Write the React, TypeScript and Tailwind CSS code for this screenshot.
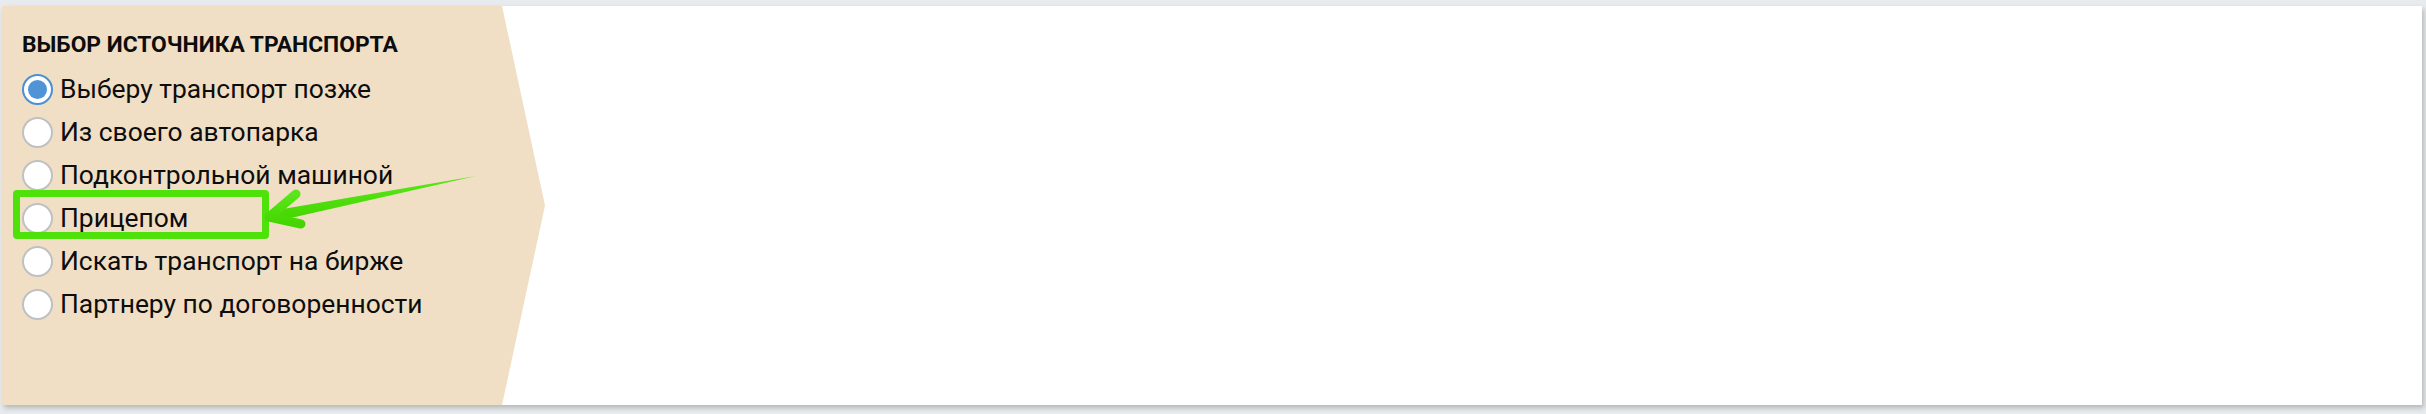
import React from "react";

const options = [
  "Выберу транспорт позже",
  "Из своего автопарка",
  "Подконтрольной машиной",
  "Прицепом",
  "Искать транспорт на бирже",
  "Партнеру по договоренности",
];

function Radio({ checked }: { checked: boolean }) {
  if (checked) {
    return (
      <span className="flex h-[31px] w-[31px] shrink-0 items-center justify-center rounded-full border-[2.5px] border-[#4a8fd8] bg-white">
        <span className="h-[19px] w-[19px] rounded-full bg-[#5094d6]" />
      </span>
    );
  }
  return (
    <span className="h-[31px] w-[31px] shrink-0 rounded-full border-[2px] border-[#bfc0c2] bg-white" />
  );
}

export default function App() {
  return (
    <div
      className="min-h-[414px] w-full bg-[#e8ebed] pt-[6px] pl-[2px] pr-[4px]"
      style={{ fontFamily: "Roboto, 'Liberation Sans', sans-serif" }}
    >
      <div className="relative h-[399px] bg-white shadow-[2px_3px_5px_rgba(0,0,0,0.22)]">
        <div className="h-full w-[545px] bg-[#f0dfc4] pl-[20px] pt-[26px] [clip-path:polygon(0_0,500px_0,543px_50%,500px_100%,0_100%)]">
          <h2 className="text-[22.8px] font-bold uppercase leading-[26px] text-[#0d0d0d]">
            Выбор источника транспорта
          </h2>
          <div className="mt-[16px] flex flex-col gap-[12px]">
            {options.map((o, i) => (
              <label key={o} className="flex h-[31px] items-center gap-[7px]">
                <Radio checked={i === 0} />
                <span className="text-[26.4px] leading-[31px] text-[#0d0d0d]">{o}</span>
              </label>
            ))}
          </div>
        </div>

        <div className="pointer-events-none absolute left-[11px] top-[184px] h-[49px] w-[256px] rounded-[4px] border-[7px] border-[#4fe20a]" />

        <svg
          className="pointer-events-none absolute left-0 top-0"
          width="545"
          height="399"
          viewBox="0 0 545 399"
        >
          <defs>
            <linearGradient id="g" x1="0" y1="0" x2="0" y2="1">
              <stop offset="0" stopColor="#5ae61a" />
              <stop offset="1" stopColor="#44d600" />
            </linearGradient>
          </defs>
          <polygon points="474,170 269,205 271,216" fill="url(#g)" />
          <path
            d="M294,188 L267,211 L299,218"
            fill="none"
            stroke="url(#g)"
            strokeWidth="9"
            strokeLinecap="round"
            strokeLinejoin="round"
          />
        </svg>
      </div>
    </div>
  );
}
